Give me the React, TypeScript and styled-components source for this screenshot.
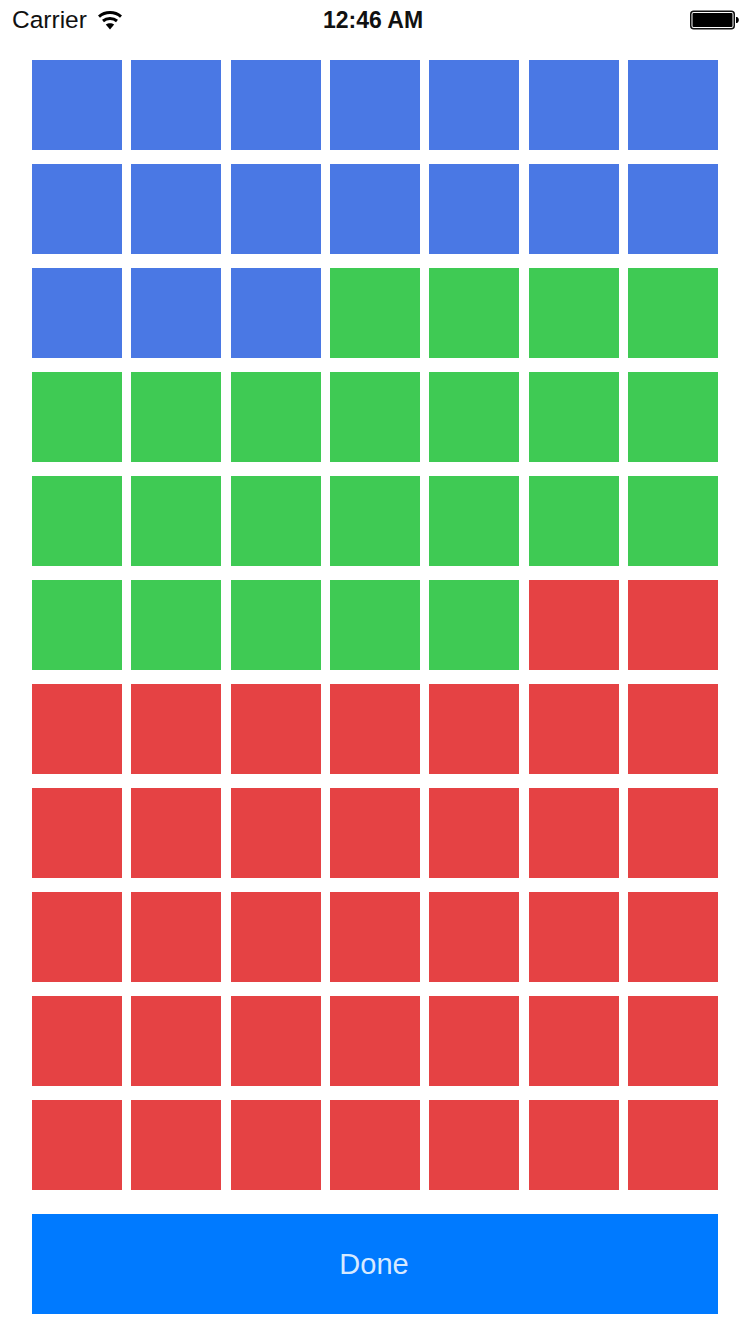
import React from "react";
import styled, { createGlobalStyle } from "styled-components";

const Global = createGlobalStyle`
  html, body { margin: 0; padding: 0; background: #fff; }
  body { font-family: "Liberation Sans", Arial, sans-serif; }
`;

const Page = styled.div`
  width: 750px;
  height: 1334px;
  display: flex;
  flex-direction: column;
  background: #fff;
  overflow: hidden;
`;

const StatusBar = styled.div`
  height: 40px;
  padding: 0 11px 0 12px;
  display: grid;
  grid-template-columns: 1fr auto 1fr;
  align-items: center;
  color: #111;
`;

const Left = styled.div`
  display: flex;
  align-items: center;
  gap: 11px;
`;

const Carrier = styled.span`
  font-size: 24.5px;
  line-height: 40px;
`;

const Time = styled.span`
  padding-right: 5px;
  font-size: 23px;
  font-weight: 700;
  line-height: 40px;
`;

const Right = styled.div`
  display: flex;
  justify-content: flex-end;
`;

const Content = styled.main`
  padding: 20px 32px 0;
  display: flex;
  flex-direction: column;
  gap: 24px;
`;

const Grid = styled.div`
  display: grid;
  grid-template-columns: repeat(7, 90px);
  grid-auto-rows: 90px;
  justify-content: space-between;
  row-gap: 14px;
`;

const COLORS = { blue: "#4a78e4", green: "#3fca54", red: "#e54244" };
type Tone = keyof typeof COLORS;

const Tile = styled.div<{ $tone: Tone }>`
  background: ${(p) => COLORS[p.$tone]};
`;

const DoneButton = styled.button`
  height: 100px;
  border: 0;
  padding: 0 2px 0 0;
  background: #007aff;
  color: rgba(255, 255, 255, 0.86);
  font-family: inherit;
  font-size: 29px;
`;

const Wifi = () => (
  <svg width="24" height="20" viewBox="0 0 24 20" aria-hidden>
    <path d="M1 6.6C7.2 1.2 16.8 1.2 23 6.6" fill="none" stroke="#000" strokeWidth="3" />
    <path d="M5 11C8.8 7.8 15.2 7.8 19 11" fill="none" stroke="#000" strokeWidth="3" />
    <path d="M7.8 14.6C10.2 12.8 13.8 12.8 16.2 14.6L12 19.4Z" fill="#000" />
  </svg>
);

const Battery = () => (
  <svg width="49" height="20" viewBox="0 0 49 20" aria-hidden>
    <rect x="0.75" y="1.25" width="43.5" height="17.5" rx="3" fill="#fff" stroke="#111" strokeWidth="1.5" />
    <rect x="2.5" y="3" width="40" height="14" rx="1" fill="#000" />
    <path d="M46 7H47C48.2 7.6 48.8 8.8 48.8 10S48.2 12.4 47 13H46Z" fill="#000" />
  </svg>
);

const tones: Tone[] = Array.from({ length: 77 }, (_, i) =>
  i < 17 ? "blue" : i < 40 ? "green" : "red"
);

export default function App() {
  return (
    <Page>
      <Global />
      <StatusBar>
        <Left>
          <Carrier>Carrier</Carrier>
          <Wifi />
        </Left>
        <Time>12:46 AM</Time>
        <Right>
          <Battery />
        </Right>
      </StatusBar>
      <Content>
        <Grid>
          {tones.map((t, i) => (
            <Tile key={i} $tone={t} />
          ))}
        </Grid>
        <DoneButton>Done</DoneButton>
      </Content>
    </Page>
  );
}
